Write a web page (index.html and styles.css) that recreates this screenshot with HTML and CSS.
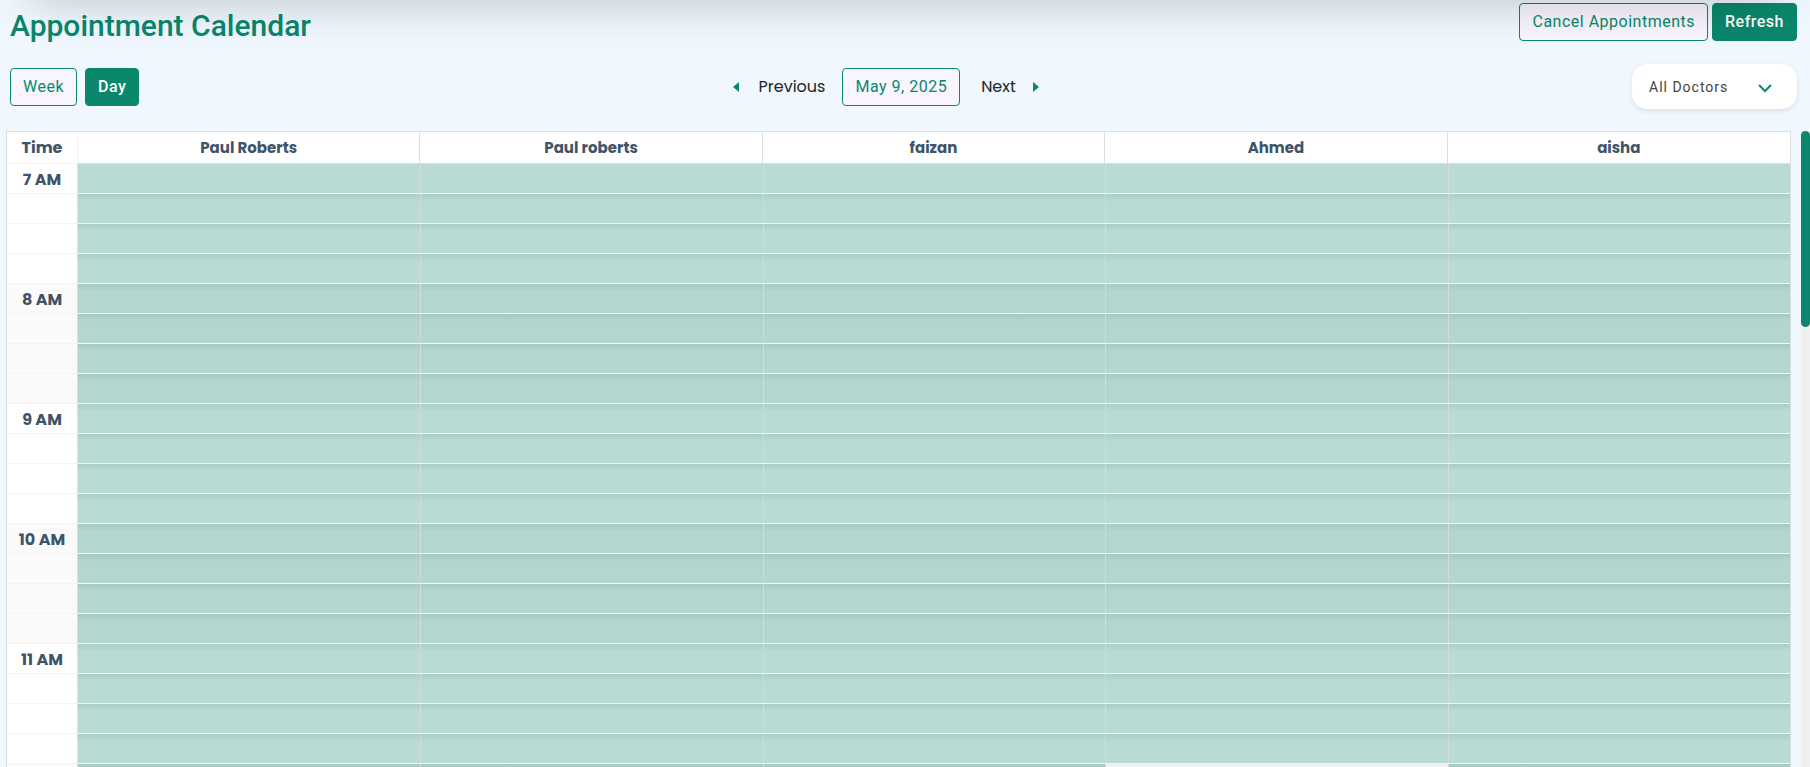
FILE: index.html
```html
<!DOCTYPE html>
<html lang="en">
<head>
  <meta charset="UTF-8">
  <title>Appointment Calendar</title>
  <link rel="stylesheet" href="styles.css">
</head>
<body>

<div class="top-shadow"></div>

<header class="page-header">
  <h1>Appointment Calendar</h1>
  <div class="actions">
    <button class="btn outline">Cancel Appointments</button>
    <button class="btn solid">Refresh</button>
  </div>
</header>

<div class="toolbar">
  <div class="views">
    <button class="btn outline">Week</button>
    <button class="btn solid">Day</button>
  </div>
  <div class="date-nav">
    <button class="nav-btn">
      <svg width="6" height="10" viewBox="0 0 6 10"><path d="M6 0v10L0 5z"/></svg>
      Previous
    </button>
    <button class="btn outline">May 9, 2025</button>
    <button class="nav-btn next">
      Next
      <svg width="6" height="10" viewBox="0 0 6 10"><path d="M0 0v10l6-5z"/></svg>
    </button>
  </div>
  <div class="doctor-filter">
    <select id="doctor" aria-label="Doctor">
      <option>All Doctors</option>
    </select>
    <svg class="chevron" width="14" height="9" viewBox="0 0 14 9"><path d="M1 1l6 6 6-6"/></svg>
  </div>
</div>

<main class="calendar">
  <div class="calendar-view">
    <table>
      <thead>
        <tr><th class="time"><span>Time</span></th><th>Paul Roberts</th><th>Paul roberts</th><th>faizan</th><th>Ahmed</th><th>aisha</th></tr>
      </thead>
      <tbody id="slots"></tbody>
    </table>
  </div>
  <div class="scroll-track"><div class="scroll-thumb"></div></div>
</main>

<script src="script.js"></script>
</body>
</html>
```
FILE: styles.css
```css
* { box-sizing: border-box; }
body {
  margin: 0;
  height: 100vh;
  display: flex;
  flex-direction: column;
  overflow: hidden;
  background: #f0f7ff;
  color: #212529;
  font-family: Poppins, Inter, sans-serif;
  font-size: 16px;
}

/* shadow of the bar above the page */
.top-shadow {
  position: absolute;
  top: -60px;
  left: 32px;
  right: 32px;
  height: 60px;
  box-shadow: 0 0 50px rgba(0, 0, 0, 0.22);
  pointer-events: none;
}

.page-header {
  display: flex;
  justify-content: space-between;
  align-items: flex-start;
  padding: 3px 13px 0 10px;
}
h1 {
  margin: 0;
  padding-top: 4px;
  color: #0a876d;
  font: 500 30px/38px Roboto, sans-serif;
}
.actions { display: flex; gap: 4px; }

.btn {
  height: 38px;
  padding: 0 12px;
  border: 1px solid #0a876d;
  border-radius: 4px;
  font: 400 16px/24px Roboto, sans-serif;
  letter-spacing: 0.5px;
}
.outline { background: #f8f5ff; color: #0a876d; }
.solid { background: #0a876d; color: #fff; font-weight: 500; }

.toolbar {
  display: flex;
  justify-content: space-between;
  align-items: center;
  padding: 19px 13px 22px 10px;
}
.views { display: flex; gap: 8px; }
.date-nav { display: flex; align-items: center; gap: 17px; }
.nav-btn {
  display: flex;
  align-items: center;
  gap: 20px;
  padding: 0;
  border: 0;
  background: none;
  color: #212529;
  font: inherit;
}
.nav-btn svg { fill: #0a876d; }
.next { gap: 17px; margin-left: 4px; }

.doctor-filter { position: relative; }
.doctor-filter select {
  display: block;
  appearance: none;
  width: 165px;
  height: 45px;
  padding: 0 17px;
  border: 0;
  border-radius: 15px;
  background: #fff;
  box-shadow: 0 2px 5px rgba(0, 0, 0, 0.1);
  color: #444;
  font: 14px Roboto, sans-serif;
  letter-spacing: 1px;
}
.chevron {
  position: absolute;
  right: 25px;
  top: 20px;
  fill: none;
  stroke: #0a876d;
  stroke-width: 2;
  pointer-events: none;
}

.calendar {
  flex: 1;
  min-height: 0;
  display: flex;
  gap: 10px;
  padding-left: 6px;
}
.calendar-view {
  flex: 1;
  overflow: hidden;
  border: 1px solid #dcdde1;
  border-bottom: 0;
  background: #fff;
}
table {
  width: 100%;
  table-layout: fixed;
  border-spacing: 0;
  color: #3f5469;
}
th, td { padding: 0; height: 30px; text-align: center; }
.time {
  width: 71px;
  padding-top: 3px;
  border-right: 1px solid #dcdde1;
  border-bottom: 1px solid #f3f3f3;
  line-height: 24px;
  font-size: 16px;
  font-weight: 700;
}
thead th {
  height: 32px;
  border-right: 1px solid #dcdde1;
  border-bottom: 1px solid #dcdde1;
  font-size: 15px;
  font-weight: 700;
}
thead th:last-child { border-right: 0; }
thead .time {
  padding: 4px 0 0;
  border-right: 0;
  font-size: 16px;
}
thead .time span {
  display: block;
  height: 27px;
  border-right: 1px solid #f3f3f3;
}
.slot {
  border-bottom: 1px solid #eef9f6;
  background: linear-gradient(#aacec6, #b8dbd4 7px);
}
.slot + .slot { border-left: 1px solid #d5dad9; }
tr:first-child .slot { background: #b8dbd4; }
.alt .time { background: #fafafa; }
.alt .slot { background: linear-gradient(#a6c9c2, #b3d6cf 7px); }
.alt .free { background: #efefef; }

.scroll-track { width: 9px; background: #f0f0f0; }
.scroll-thumb { height: 196px; border-radius: 5px; background: #0a876d; }
```
FILE: script.js
```js
const hours = ["7 AM", "8 AM", "9 AM", "10 AM", "11 AM"];
const doctors = ["Paul Roberts", "Paul roberts", "faizan", "Ahmed", "aisha"];

// four 15 minute slots per hour
let rows = "";
hours.forEach((hour, i) => {
  const cells = doctors.map(() => `<td class="slot"></td>`).join("");
  for (let q = 0; q < 4; q++) {
    rows += `<tr class="${i % 2 ? "alt" : ""}"><th class="time">${q === 0 ? hour : ""}</th>${cells}</tr>`;
  }
});

// noon: only Ahmed has nothing booked
const noon = doctors.map(d => `<td class="slot${d === "Ahmed" ? " free" : ""}"></td>`).join("");
rows += `<tr class="alt"><th class="time"></th>${noon}</tr>`;

document.getElementById("slots").innerHTML = rows;
```
